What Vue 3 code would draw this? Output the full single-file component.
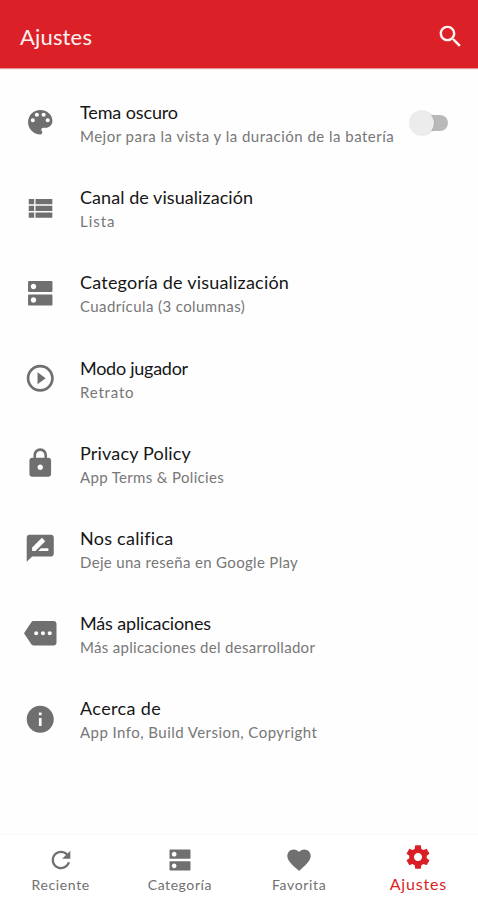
<template>
  <div class="screen">
    <header class="toolbar">
      <h1 class="toolbarTitle"><span v-fit="72">Ajustes</span></h1>
      <svg class="searchIcon" viewBox="0 0 24 24"><path :d="icons.search" /></svg>
    </header>

    <main class="list">
      <div class="row" v-for="item in settings" :key="item.title">
        <svg class="rowIcon" viewBox="0 0 24 24"><path :d="icons[item.icon]" /></svg>
        <div class="rowText">
          <div class="title"><span v-fit="item.titleWidth">{{ item.title }}</span></div>
          <div class="summary"><span v-fit="item.textWidth">{{ item.text }}</span></div>
        </div>
        <div class="switch" v-if="item.toggle"><span class="thumb"></span></div>
      </div>
    </main>

    <nav class="bottomNav">
      <div
        class="navItem"
        :class="{ active: tab.active }"
        v-for="tab in tabs"
        :key="tab.label"
      >
        <svg class="navIcon" viewBox="0 0 24 24"><path :d="icons[tab.icon]" /></svg>
        <div class="navLabel"><span v-fit="tab.width">{{ tab.label }}</span></div>
      </div>
    </nav>
  </div>
</template>

<script setup>
// spreads the letters so that the text takes the given width
const vFit = {
  mounted(el, { value }) {
    const width = el.getBoundingClientRect().width;
    el.style.letterSpacing = `${(value - width) / (el.textContent.length - 0.5)}px`;
  },
};

const icons = {
  search:
    "M15.5 14h-.79l-.28-.27C15.41 12.59 16 11.11 16 9.5 16 5.91 13.09 3 9.5 3S3 5.91 3 9.5 5.91 16 9.5 16c1.61 0 3.09-.59 4.23-1.57l.27.28v.79l5 4.99L20.49 19l-4.99-5zm-6 0C7.01 14 5 11.99 5 9.5S7.01 5 9.5 5 14 7.01 14 9.5 11.99 14 9.5 14z",
  palette:
    "M12 3c-4.97 0-9 4.03-9 9s4.03 9 9 9c.83 0 1.5-.67 1.5-1.5 0-.39-.15-.74-.39-1.01-.23-.26-.38-.61-.38-.99 0-.83.67-1.5 1.5-1.5H16c2.76 0 5-2.24 5-5 0-4.42-4.03-8-9-8zm-5.5 9c-.83 0-1.5-.67-1.5-1.5S5.67 9 6.5 9 8 9.67 8 10.5 7.33 12 6.5 12zm3-4C8.67 8 8 7.33 8 6.5S8.67 5 9.5 5s1.5.67 1.5 1.5S10.33 8 9.5 8zm5 0c-.83 0-1.5-.67-1.5-1.5S13.67 5 14.5 5s1.5.67 1.5 1.5S15.33 8 14.5 8zm3 4c-.83 0-1.5-.67-1.5-1.5S16.67 9 17.5 9s1.5.67 1.5 1.5-.67 1.5-1.5 1.5z",
  list:
    "M3.5 14h4v-3.9h-4V14zm0 5h4v-3.9h-4V19zm0-10h4V5.1h-4V9zm5 5h12.4v-3.9H8.5V14zm0 5h12.4v-3.9H8.5V19zm0-13.9V9h12.4V5.1H8.5z",
  dns:
    "M20.4 13H3.6c-.4 0-.6.2-.6.6v6.8c0 .4.2.6.6.6h16.8c.4 0 .6-.2.6-.6v-6.8c0-.4-.2-.6-.6-.6zM7 19c-1.1 0-2-.9-2-2s.9-2 2-2 2 .9 2 2-.9 2-2 2zM20.4 3H3.6c-.4 0-.6.2-.6.6v6.8c0 .4.2.6.6.6h16.8c.4 0 .6-.2.6-.6V3.6c0-.4-.2-.6-.6-.6zM7 9c-1.1 0-2-.9-2-2s.9-2 2-2 2 .9 2 2-.9 2-2 2z",
  play:
    "M10 16.5l6-4.5-6-4.5v9zM12 2C6.48 2 2 6.48 2 12s4.48 10 10 10 10-4.48 10-10S17.52 2 12 2zm0 18c-4.41 0-8-3.59-8-8s3.59-8 8-8 8 3.59 8 8-3.59 8-8 8z",
  lock:
    "M18 8h-1V6c0-2.76-2.24-5-5-5S7 3.24 7 6v2H6c-1.1 0-2 .9-2 2v10c0 1.1.9 2 2 2h12c1.1 0 2-.9 2-2V10c0-1.1-.9-2-2-2zm-6 9c-1.1 0-2-.9-2-2s.9-2 2-2 2 .9 2 2-.9 2-2 2zm3.1-9H8.9V6c0-1.71 1.39-3.1 3.1-3.1 1.71 0 3.1 1.39 3.1 3.1v2z",
  review:
    "M20 2H4c-1.1 0-1.99.9-1.99 2L2 22l4-4h14c1.1 0 2-.9 2-2V4c0-1.1-.9-2-2-2zM6 14v-2.47l6.88-6.88c.2-.2.51-.2.71 0l1.77 1.77c.2.2.2.51 0 .71L8.47 14H6zm12 0h-7.5l2-2H18v2z",
  more:
    "M22 3H7c-.69 0-1.23.35-1.59.88L0 12l5.41 8.11c.36.53.97.89 1.66.89H22c1.1 0 2-.9 2-2V5c0-1.1-.9-2-2-2zM9 13.5c-.83 0-1.5-.67-1.5-1.5s.67-1.5 1.5-1.5 1.5.67 1.5 1.5-.67 1.5-1.5 1.5zm5 0c-.83 0-1.5-.67-1.5-1.5s.67-1.5 1.5-1.5 1.5.67 1.5 1.5-.67 1.5-1.5 1.5zm5 0c-.83 0-1.5-.67-1.5-1.5s.67-1.5 1.5-1.5 1.5.67 1.5 1.5-.67 1.5-1.5 1.5z",
  info:
    "M12 2C6.48 2 2 6.48 2 12s4.48 10 10 10 10-4.48 10-10S17.52 2 12 2zm1 15h-2v-6h2v6zm0-8h-2V7h2v2z",
  refresh:
    "M17.65 6.35C16.2 4.9 14.21 4 12 4c-4.42 0-7.99 3.58-7.99 8s3.57 8 7.99 8c3.73 0 6.84-2.55 7.73-6h-2.08c-.82 2.33-3.04 4-5.65 4-3.31 0-6-2.69-6-6s2.69-6 6-6c1.66 0 3.14.69 4.22 1.78L13 11h7V4l-2.35 2.35z",
  heart:
    "M12 21.35l-1.45-1.32C5.4 15.36 2 12.28 2 8.5 2 5.42 4.42 3 7.5 3c1.74 0 3.41.81 4.5 2.09C13.09 3.81 14.76 3 16.5 3 19.58 3 22 5.42 22 8.5c0 3.78-3.4 6.86-8.55 11.54L12 21.35z",
  settings:
    "M19.43 12.98c.04-.32.07-.64.07-.98s-.03-.66-.07-.98l2.11-1.65c.19-.15.24-.42.12-.64l-2-3.46c-.12-.22-.39-.3-.61-.22l-2.49 1c-.52-.4-1.08-.73-1.69-.98l-.38-2.65C14.46 2.18 14.25 2 14 2h-4c-.25 0-.46.18-.49.42l-.38 2.65c-.61.25-1.17.59-1.69.98l-2.49-1c-.23-.09-.49 0-.61.22l-2 3.46c-.13.22-.07.49.12.64l2.11 1.65c-.04.32-.07.65-.07.98s.03.66.07.98l-2.11 1.65c-.19.15-.24.42-.12.64l2 3.46c.12.22.39.3.61.22l2.49-1c.52.4 1.08.73 1.69.98l.38 2.65c.03.24.24.42.49.42h4c.25 0 .46-.18.49-.42l.38-2.65c.61-.25 1.17-.59 1.69-.98l2.49 1c.23.09.49 0 .61-.22l2-3.46c.12-.22.07-.49-.12-.64l-2.11-1.65zM12 15.5c-1.93 0-3.5-1.57-3.5-3.5s1.57-3.5 3.5-3.5 3.5 1.57 3.5 3.5-1.57 3.5-3.5 3.5z",
};

const settings = [
  {
    icon: "palette",
    title: "Tema oscuro",
    titleWidth: 98,
    text: "Mejor para la vista y la duración de la batería",
    textWidth: 314,
    toggle: true,
  },
  { icon: "list", title: "Canal de visualización", titleWidth: 173, text: "Lista", textWidth: 35 },
  {
    icon: "dns",
    title: "Categoría de visualización",
    titleWidth: 209,
    text: "Cuadrícula (3 columnas)",
    textWidth: 165,
  },
  { icon: "play", title: "Modo jugador", titleWidth: 108, text: "Retrato", textWidth: 54 },
  {
    icon: "lock",
    title: "Privacy Policy",
    titleWidth: 111,
    text: "App Terms & Policies",
    textWidth: 144,
  },
  {
    icon: "review",
    title: "Nos califica",
    titleWidth: 93,
    text: "Deje una reseña en Google Play",
    textWidth: 218,
  },
  {
    icon: "more",
    title: "Más aplicaciones",
    titleWidth: 131,
    text: "Más aplicaciones del desarrollador",
    textWidth: 235,
  },
  {
    icon: "info",
    title: "Acerca de",
    titleWidth: 81,
    text: "App Info, Build Version, Copyright",
    textWidth: 237,
  },
];

const tabs = [
  { icon: "refresh", label: "Reciente", width: 58 },
  { icon: "dns", label: "Categoría", width: 64 },
  { icon: "heart", label: "Favorita", width: 54 },
  { icon: "settings", label: "Ajustes", width: 57, active: true },
];
</script>

<style>
body {
  margin: 0;
  background: #fefefe;
}
</style>

<style scoped>
.screen {
  display: flex;
  flex-direction: column;
  width: 478px;
  height: 900px;
  overflow: hidden;
  background: #fefefe;
  color: #161616;
  font-family: Lato, "Open Sans", sans-serif;
}
svg {
  display: block;
  flex: none;
  fill: currentColor;
}
.toolbar {
  display: flex;
  align-items: center;
  justify-content: space-between;
  flex: none;
  box-sizing: border-box;
  height: 68px;
  padding: 4px 13px 0 20px;
  background: #db2127;
  color: #fff4f3;
  box-shadow: 0 1px 1px rgba(200, 50, 55, 0.5);
}
.toolbarTitle {
  margin: 2px 0 0;
  font-size: 22px;
  line-height: 28px;
  font-weight: 400;
  white-space: nowrap;
}
.searchIcon {
  width: 29px;
  height: 29px;
}
.list {
  flex: 1;
  padding-top: 12px;
}
.row {
  display: flex;
  align-items: center;
  height: 85.2px;
  padding: 0 30px 0 24px;
}
.rowIcon {
  width: 32.5px;
  height: 32.5px;
  color: #6f6f6f;
}
.rowText {
  flex: 1;
  margin: 3px 0 0 23.5px;
  white-space: nowrap;
}
.title {
  font-size: 18px;
  line-height: 24px;
}
.summary {
  font-size: 15px;
  line-height: 24px;
  color: #777;
}
.switch {
  display: flex;
  align-items: center;
  flex: none;
  width: 35px;
  height: 16px;
  margin-left: -20px;
  border-radius: 8px;
  background: #b9b9b9;
}
.thumb {
  width: 24px;
  height: 24px;
  margin-left: -3px;
  border-radius: 50%;
  background: #ececec;
  box-shadow: 0 0 2px rgba(0, 0, 0, 0.22);
}
.bottomNav {
  display: grid;
  grid-template-columns: repeat(4, 1fr);
  flex: none;
  box-sizing: border-box;
  height: 66px;
  padding-left: 1px;
  border-top: 1px solid #f9f9f9;
  background: #fff;
}
.navItem {
  display: flex;
  flex-direction: column;
  align-items: center;
  padding-top: 11px;
  color: #707070;
}
.navIcon {
  width: 28px;
  height: 28px;
}
.navLabel {
  margin-top: 1px;
  font-size: 14px;
  line-height: 20px;
  white-space: nowrap;
}
.active {
  padding-top: 8px;
  color: #d91f26;
}
.active .navLabel {
  margin-top: 3px;
  font-size: 16px;
}
</style>
